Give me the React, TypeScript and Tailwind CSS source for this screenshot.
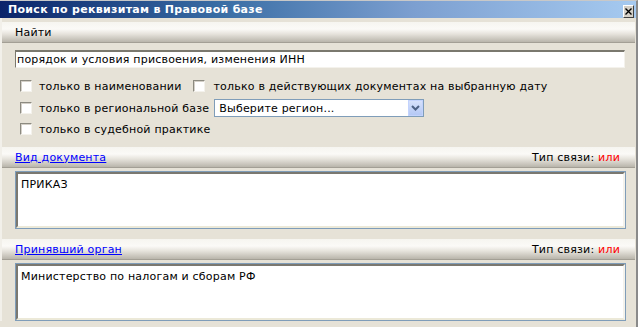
import React from "react";

const font = { fontFamily: '"DejaVu Sans", Verdana, sans-serif' };

function Checkbox() {
  return (
    <span className="inline-block w-[12px] h-[12px] bg-white border-t border-l border-t-[#8c8a80] border-l-[#8c8a80] border-b border-r border-b-[#f4f2ec] border-r-[#f4f2ec] shadow-[inset_1px_1px_0_#d4d0c8] shrink-0" />
  );
}

function Bar({ children }: { children: React.ReactNode }) {
  return (
    <div className="h-[21px] flex items-center px-[13px] border-b border-b-[#a39f95] bg-[linear-gradient(to_bottom,#f6f5f0_0%,#fbfaf7_35%,#e6e3dc_60%,#b9b5ab_100%)]">
      {children}
    </div>
  );
}

function Area({ text }: { text: string }) {
  return (
    <div className="ml-[13px] w-[611px] h-[58px] border border-[#7f9db9] bg-white">
      <div className="w-full h-full border-t-2 border-l-2 border-t-[#7a7870] border-l-[#7a7870] border-b-2 border-r-2 border-b-[#ece9d8] border-r-[#f4f2ec] px-[3px] pt-[4px] text-[11px] leading-[13px] text-black">
        {text}
      </div>
    </div>
  );
}

export default function App() {
  return (
    <div
      style={font}
      className="w-[638px] h-[327px] overflow-hidden bg-[#e6e2d7] border-t border-t-[#c8c8c8] border-r-2 border-r-[#8a8a8a] text-[11px] tracking-[0.2px] text-black"
    >
      {/* Title bar */}
      <div className="h-[17px] flex items-center justify-between pl-[8px] pr-[2px] bg-[linear-gradient(to_right,#0a246a_0%,#3a6ea5_35%,#7c9fd0_65%,#a6caf0_100%)]">
        <span className="text-white font-bold text-[11px] leading-[13px] tracking-[0.3px]">
          Поиск по реквизитам в Правовой базе
        </span>
        <span className="w-[11px] h-[13px] mt-[4px] flex items-center justify-center bg-[#d4d0c8] border border-t-white border-l-white border-b-[#404040] border-r-[#404040] text-[10px] leading-none font-bold">
          <svg width="7" height="7" viewBox="0 0 7 7">
            <path d="M0.5 0.5 L6.5 6.5 M6.5 0.5 L0.5 6.5" stroke="#000" strokeWidth="1.4" />
          </svg>
        </span>
      </div>

      <div className="border-l-2 border-l-[#f2f0ea] pr-[1px]">
        <div className="h-[4px]" />
        <Bar>
          <span className="leading-[13px]">Найти</span>
        </Bar>

        {/* search input */}
        <div className="mt-[7px] ml-[13px] w-[610px] h-[18px] bg-white border-t-2 border-l border-t-[#7a786e] border-l-[#7a786e] border-b border-r border-b-[#f4f2ec] border-r-[#f4f2ec] flex items-center px-[1px] leading-[13px]">
          порядок и условия присвоения, изменения ИНН
        </div>

        {/* options */}
        <div className="mt-[12px] flex items-center h-[12px] ml-[18px]">
          <Checkbox />
          <span className="ml-[7px] leading-[13px]">только в наименовании</span>
          <span className="ml-[12px] flex items-center">
            <Checkbox />
            <span className="ml-[8px] leading-[13px]">
              только в действующих документах на выбранную дату
            </span>
          </span>
        </div>

        <div className="mt-[7px] flex items-center h-[18px] ml-[18px]">
          <Checkbox />
          <span className="ml-[7px] leading-[13px]">только в региональной базе</span>
          <div className="ml-[5px] w-[210px] h-[18px] border border-[#7f9db9] bg-white flex items-center justify-between">
            <span className="pl-[4px] leading-[13px]">Выберите регион...</span>
            <span className="w-[15px] h-[16px] bg-[linear-gradient(to_bottom,#d6e1fb,#b4c8f5)] border border-[#c3d3fd] flex items-center justify-center">
              <svg width="9" height="6" viewBox="0 0 9 6">
                <path d="M1 1 L4.5 4.5 L8 1" fill="none" stroke="#4d6185" strokeWidth="2" />
              </svg>
            </span>
          </div>
        </div>

        <div className="mt-[6px] flex items-center h-[12px] ml-[18px]">
          <Checkbox />
          <span className="ml-[7px] leading-[13px]">только в судебной практике</span>
        </div>

        <div className="h-[12px]" />
        <Bar>
          <div className="flex w-full justify-between items-center leading-[13px]">
            <span className="text-[#0000ff] underline">Вид документа</span>
            <span className="mr-[2px]">
              Тип связи: <span className="text-[#ff0000]">или</span>
            </span>
          </div>
        </Bar>
        <div className="h-[3px]" />
        <Area text="ПРИКАЗ" />

        <div className="h-[10px]" />
        <Bar>
          <div className="flex w-full justify-between items-center leading-[13px]">
            <span className="text-[#0000ff] underline">Принявший орган</span>
            <span className="mr-[2px]">
              Тип связи: <span className="text-[#ff0000]">или</span>
            </span>
          </div>
        </Bar>
        <div className="h-[3px]" />
        <Area text="Министерство по налогам и сборам РФ" />
      </div>
    </div>
  );
}
